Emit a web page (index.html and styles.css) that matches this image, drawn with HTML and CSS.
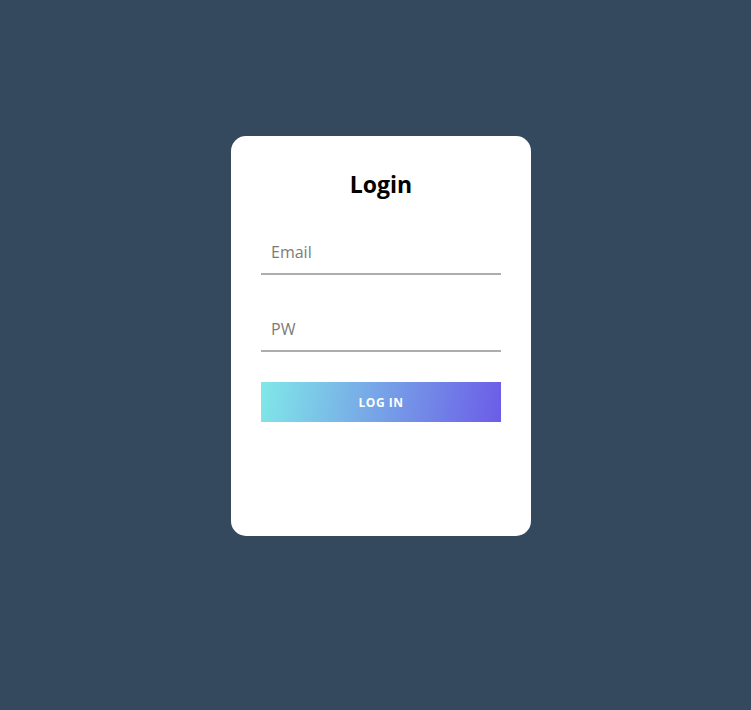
FILE: index.html
```html
<!DOCTYPE html>
<html lang="ko">
<head>
    <meta charset="UTF-8">
    <meta name="viewport" content="width=device-width, initial-scale=1.0">
    <title>Login</title>
    <link rel="stylesheet" href="styles.css">
</head>
<body>
    <div class="login-wrap">
        <form class="login-card">
            <h2 class="login-title">Login</h2>
            <input type="text" class="login-input" placeholder="Email">
            <input type="password" class="login-input" placeholder="PW">
            <button type="button" class="login-btn">LOG IN</button>
        </form>
    </div>
</body>
</html>
```

FILE: styles.css
```css
body {
    font-family: 'Open Sans', 'Noto Sans', sans-serif;
    margin: 0;
    background-color: #34495e;
    min-height: 100vh;
}
.login-wrap {
    display: flex;
    justify-content: flex-start;
    padding: 136px 0 0 231px;
}
.login-card {
    width: 300px;
    height: 400px;
    box-sizing: border-box;
    padding: 30px;
    background-color: white;
    border-radius: 15px;
    display: flex;
    flex-direction: column;
}
.login-title {
    margin: 0 0 33px;
    font-size: 23px;
    line-height: 36px;
    font-weight: bold;
    text-align: center;
    color: #000;
}
.login-input {
    height: 40px;
    box-sizing: border-box;
    border: none;
    border-bottom: 2px solid #adadad;
    padding: 0 10px 5px;
    font-family: inherit;
    font-size: 16px;
    outline: none;
    margin-bottom: 37px;
}
.login-input::placeholder {
    color: #7b7b7b;
}
.login-input + .login-input {
    margin-bottom: 30px;
}
.login-btn {
    height: 40px;
    border: none;
    color: white;
    font-family: inherit;
    font-weight: bold;
    font-size: 12px;
    letter-spacing: 0.5px;
    background: linear-gradient(100deg, #80e8e8 0%, #6c5ce7 100%);
    cursor: pointer;
}
```
